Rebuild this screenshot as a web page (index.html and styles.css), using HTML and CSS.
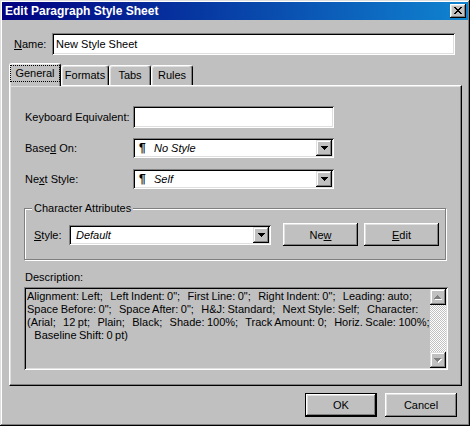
FILE: index.html
```html
<!DOCTYPE html>
<html>
<head>
<meta charset="utf-8">
<link rel="stylesheet" href="styles.css">
</head>
<body>
<div class="window">
  <div class="titlebar">
    <span class="title">Edit Paragraph Style Sheet</span>
    <span class="close"><svg width="8" height="7" viewBox="0 0 8 7" shape-rendering="crispEdges"><path fill="#000" d="M0 0h2v1h-2z M6 0h2v1h-2z M1 1h2v1h-2z M5 1h2v1h-2z M2 2h4v1h-4z M3 3h2v1h-2z M2 4h4v1h-4z M1 5h2v1h-2z M5 5h2v1h-2z M0 6h2v1h-2z M6 6h2v1h-2z"/></svg></span>
  </div>

  <div class="name-row">
    <span class="name-lbl"><u>N</u>ame:</span>
    <div class="field name-field">New Style Sheet</div>
  </div>

  <div class="content">
    <div class="tabs">
      <div class="tab active tab-general"><span class="focus">General</span></div>
      <div class="tab tab-formats">Formats</div>
      <div class="tab tab-tabs">Tabs</div>
      <div class="tab tab-rules">Rules</div>
    </div>

    <div class="panel">
      <div class="row row-ke">
        <span class="lbl">Keyboard Equivalent:</span>
        <div class="field ke"></div>
      </div>
      <div class="row row-based">
        <span class="lbl">Base<u>d</u> On:</span>
        <div class="field combo">
          <span class="pil">¶</span><span class="val">No Style</span>
          <span class="drop"><svg width="7" height="4" viewBox="0 0 7 4" shape-rendering="crispEdges"><path fill="#000" d="M0 0h7v1h-1v1h-1v1h-1v1h-1v-1h-1v-1h-1v-1h-1z"/></svg></span>
        </div>
      </div>
      <div class="row row-next">
        <span class="lbl">Ne<u>x</u>t Style:</span>
        <div class="field combo">
          <span class="pil">¶</span><span class="val">Self</span>
          <span class="drop"><svg width="7" height="4" viewBox="0 0 7 4" shape-rendering="crispEdges"><path fill="#000" d="M0 0h7v1h-1v1h-1v1h-1v1h-1v-1h-1v-1h-1v-1h-1z"/></svg></span>
        </div>
      </div>

      <div class="group">
        <span class="legend">Character Attributes</span>
        <div class="group-row">
          <span class="style-lbl"><u>S</u>tyle:</span>
          <div class="field combo style-combo">
            <span class="val">Default</span>
            <span class="drop"><svg width="7" height="4" viewBox="0 0 7 4" shape-rendering="crispEdges"><path fill="#000" d="M0 0h7v1h-1v1h-1v1h-1v1h-1v-1h-1v-1h-1v-1h-1z"/></svg></span>
          </div>
          <div class="btn btn-new">Ne<u>w</u></div>
          <div class="btn btn-edit"><u>E</u>dit</div>
        </div>
      </div>

      <div class="desc-lbl">Description:</div>
      <div class="field desc">
        <div class="desc-text">Alignment: Left;   Left Indent: 0";   First Line: 0";   Right Indent: 0";   Leading: auto;
Space Before: 0";   Space After: 0";   H&amp;J: Standard;   Next Style: Self;   Character:
(Arial;   12 pt;   Plain;   Black;   Shade: 100%;   Track Amount: 0;   Horiz. Scale: 100%;
   Baseline Shift: 0 pt)</div>
        <div class="scrollbar">
          <span class="sbtn"><svg width="8" height="5" viewBox="0 0 8 5" shape-rendering="crispEdges"><path fill="#fff" d="M4 1h1v1h1v1h1v1h1v1h-7v-1h1v-1h1v-1h1z"/><path fill="#808080" d="M3 0h1v1h1v1h1v1h1v1h-7v-1h1v-1h1v-1h1z"/></svg></span>
          <span class="track"></span>
          <span class="sbtn"><svg width="8" height="5" viewBox="0 0 8 5" shape-rendering="crispEdges"><path fill="#fff" d="M1 1h7v1h-1v1h-1v1h-1v1h-1v-1h-1v-1h-1v-1h-1z"/><path fill="#808080" d="M0 0h7v1h-1v1h-1v1h-1v1h-1v-1h-1v-1h-1v-1h-1z"/></svg></span>
        </div>
      </div>
    </div>
  </div>

  <div class="footer">
    <div class="btn btn-default">OK</div>
    <div class="btn">Cancel</div>
  </div>
</div>
</body>
</html>
```

FILE: styles.css
```css
* { box-sizing: border-box; }

body {
  margin: 0;
}

.window {
  width: 470px;
  height: 426px;
  padding: 2px;
  background: #c0c0c0;
  font-family: "Liberation Sans", Arial, sans-serif;
  font-size: 11px;
  color: #000;
  box-shadow: inset -1px -1px #000, inset 1px 1px #dfdfdf, inset -2px -2px #808080, inset 2px 2px #fff;
  display: flex;
  flex-direction: column;
}

u { text-decoration: underline; text-underline-offset: 1px; }

/* title bar */
.titlebar {
  height: 18px;
  background: linear-gradient(90deg, #000080, #1084d0);
  display: flex;
  align-items: center;
  justify-content: space-between;
  padding: 0 2px 0 3px;
}

.title {
  color: #fff;
  font-weight: bold;
  font-size: 12px;
}

.close {
  width: 16px;
  height: 14px;
  background: #c0c0c0;
  box-shadow: inset -1px -1px #000, inset 1px 1px #fff, inset -2px -2px #808080, inset 2px 2px #dfdfdf;
  display: flex;
  align-items: center;
  justify-content: center;
  padding-bottom: 1px;
}

/* fields */
.field {
  background: #fff;
  box-shadow: inset 1px 1px #808080, inset -1px -1px #fff, inset 2px 2px #000, inset -2px -2px #dfdfdf;
}

.name-row {
  display: flex;
  align-items: center;
  margin-top: 13px;
  padding-left: 12px;
}

.name-lbl {
  width: 38px;
}

.name-field {
  width: 403px;
  height: 22px;
  padding: 0 4px;
  line-height: 22px;
}

/* tabs */
.content {
  padding: 0 6px 0 7px;
}

.tabs {
  display: flex;
  align-items: flex-end;
  height: 22px;
  margin-top: 8px;
}

.tab {
  height: 20px;
  line-height: 19px;
  text-align: center;
  background: #c0c0c0;
  border-top: 1px solid #fff;
  border-left: 1px solid #fff;
  border-right: 1px solid #000;
  border-radius: 3px 3px 0 0;
  box-shadow: inset -1px 0 #808080, inset 1px 1px #dfdfdf;
}

.tab-general { width: 52px; }
.tab-formats { width: 48px; }
.tab-tabs { width: 42px; }
.tab-rules { width: 42px; }

.tab.active {
  height: 23px;
  margin-bottom: -1px;
  position: relative;
  z-index: 1;
  line-height: 15px;
  padding-top: 2px;
}

.focus {
  display: inline-block;
  outline: 1px dotted #000;
  padding: 0 4px;
  line-height: 15px;
}

/* panel */
.panel {
  height: 301px;
  border-top: 1px solid #fff;
  border-left: 1px solid #fff;
  border-right: 1px solid #000;
  border-bottom: 1px solid #000;
  box-shadow: inset -1px -1px #808080, inset 1px 1px #dfdfdf;
  padding: 20px 0 0 14px;
}

.row {
  display: flex;
  align-items: center;
}

.lbl {
  width: 109px;
  padding-left: 1px;
}

.ke {
  width: 201px;
  height: 22px;
}

.row-based { margin-top: 10px; }
.row-next { margin-top: 11px; }

.combo {
  width: 201px;
  height: 20px;
  display: flex;
  align-items: center;
  padding-left: 6px;
}

.pil {
  font-weight: bold;
  font-size: 12px;
  width: 15px;
}

.val {
  font-style: italic;
  flex: 1;
}

.drop {
  width: 16px;
  height: 16px;
  margin-right: 2px;
  background: #c0c0c0;
  box-shadow: inset -1px -1px #000, inset 1px 1px #dfdfdf, inset -2px -2px #808080, inset 2px 2px #fff;
  display: flex;
  align-items: center;
  justify-content: center;
}

/* group */
.group {
  position: relative;
  width: 422px;
  height: 52px;
  margin-top: 19px;
  border: 1px solid #808080;
  box-shadow: inset 1px 1px #fff, 1px 1px #fff;
  padding: 14px 0 0 9px;
}

.legend {
  position: absolute;
  top: -7px;
  left: 7px;
  padding: 0 2px;
  line-height: 13px;
  background: #c0c0c0;
}

.group-row {
  display: flex;
  align-items: center;
  height: 23px;
}

.style-lbl {
  width: 35px;
}

.style-combo {
  width: 202px;
  padding-left: 7px;
}

.btn {
  height: 23px;
  width: 75px;
  background: #c0c0c0;
  box-shadow: inset -1px -1px #000, inset 1px 1px #fff, inset -2px -2px #808080, inset 2px 2px #dfdfdf;
  display: flex;
  align-items: center;
  justify-content: center;
}

.btn-new { margin-left: 12px; }
.btn-edit { margin-left: 6px; }

/* description */
.desc-lbl {
  margin-top: 11px;
  line-height: 13px;
  padding-left: 1px;
}

.desc {
  margin-top: 3px;
  width: 424px;
  height: 83px;
  display: flex;
  padding: 2px;
}

.desc-text {
  flex: 1;
  white-space: pre;
  overflow: hidden;
  line-height: 13px;
  word-spacing: -0.6px;
  padding: 1px 0 0 1px;
  background: #c0c0c0;
}

.scrollbar {
  width: 16px;
  display: flex;
  flex-direction: column;
}

.sbtn {
  width: 16px;
  height: 16px;
  background: #c0c0c0;
  box-shadow: inset -1px -1px #000, inset 1px 1px #dfdfdf, inset -2px -2px #808080, inset 2px 2px #fff;
  display: flex;
  align-items: center;
  justify-content: center;
}

.track {
  flex: 1;
  background: repeating-conic-gradient(#c0c0c0 0 25%, #fff 0 50%) 0 0 / 2px 2px;
}

/* footer */
.footer {
  display: flex;
  justify-content: flex-end;
  gap: 8px;
  margin-top: 7px;
  padding-right: 11px;
}

.footer .btn {
  width: 72px;
  height: 24px;
}

.btn-default {
  border: 1px solid #000;
}
```
